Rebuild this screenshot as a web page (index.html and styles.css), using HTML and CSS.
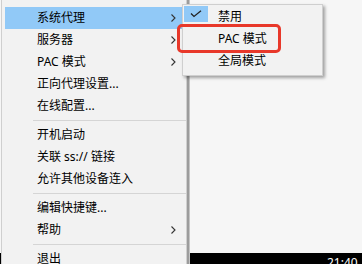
FILE: index.html
```html
<!DOCTYPE html>
<html>
<head>
<meta charset="utf-8">
<link rel="stylesheet" href="styles.css">
</head>
<body>
<div class="taskbar"><span class="clock">21:40</span></div>

<div class="menu main">
  <div class="item active"><span class="label">系统代理</span><svg class="chev" width="5" height="8" viewBox="0 0 5 8"><polyline points="0.5,0.5 4,4 0.5,7.5" fill="none" stroke="#333" stroke-width="1.1"/></svg></div>
  <div class="item"><span class="label">服务器</span><svg class="chev" width="5" height="8" viewBox="0 0 5 8"><polyline points="0.5,0.5 4,4 0.5,7.5" fill="none" stroke="#333" stroke-width="1.1"/></svg></div>
  <div class="item"><span class="label">PAC 模式</span><svg class="chev" width="5" height="8" viewBox="0 0 5 8"><polyline points="0.5,0.5 4,4 0.5,7.5" fill="none" stroke="#333" stroke-width="1.1"/></svg></div>
  <div class="item"><span class="label">正向代理设置...</span></div>
  <div class="item"><span class="label">在线配置...</span></div>
  <div class="sep"></div>
  <div class="item"><span class="label">开机启动</span></div>
  <div class="item"><span class="label">关联 ss:// 链接</span></div>
  <div class="item"><span class="label">允许其他设备连入</span></div>
  <div class="sep"></div>
  <div class="item"><span class="label">编辑快捷键...</span></div>
  <div class="item"><span class="label">帮助</span><svg class="chev" width="5" height="8" viewBox="0 0 5 8"><polyline points="0.5,0.5 4,4 0.5,7.5" fill="none" stroke="#333" stroke-width="1.1"/></svg></div>
  <div class="sep"></div>
  <div class="item"><span class="label">退出</span></div>
</div>

<div class="menu sub">
  <div class="sitem"><span class="check on"><svg width="12" height="8" viewBox="0 0 12 8"><polyline points="1,3.5 4,6.5 11,0.8" fill="none" stroke="#222" stroke-width="1.3"/></svg></span><span class="slabel">禁用</span></div>
  <div class="sitem"><span class="check"></span><span class="slabel">PAC 模式</span></div>
  <div class="sitem"><span class="check"></span><span class="slabel">全局模式</span></div>
</div>

<div class="mark"></div>
</body>
</html>
```

FILE: styles.css
```css
html, body {
  margin: 0;
  padding: 0;
}
body {
  width: 362px;
  height: 264px;
  overflow: hidden;
  position: relative;
  background: #f6f6f6;
  font-family: "Noto Sans", "Noto Sans CJK SC", sans-serif;
  font-size: 12px;
  color: #000;
}
.taskbar {
  position: absolute;
  left: 0;
  right: 0;
  top: 253px;
  height: 11px;
  background: #000;
}
.clock {
  position: absolute;
  left: 327px;
  top: 3px;
  color: #fff;
  font-size: 12px;
  line-height: 14px;
}
.menu {
  position: absolute;
  box-sizing: border-box;
  background: #f2f2f2;
  border: 1px solid #cfcfcf;
}
.main {
  left: 1px;
  top: -3px;
  width: 186px;
  padding: 9px 3px 4px 3px;
  box-shadow: 2px 0 0 #9c9c9c, 3px 0 0 #c4c4c4;
}
.item {
  height: 22px;
  display: flex;
  align-items: center;
  padding-left: 32px;
  padding-right: 7px;
}
.item.active {
  background: #91c9f7;
}
.label {
  flex: 1;
  white-space: nowrap;
  line-height: 22px;
}
.chev {
  display: block;
}
.sep {
  height: 7px;
  position: relative;
}
.sep::after {
  content: "";
  position: absolute;
  left: 28px;
  right: -3px;
  top: 3px;
  height: 1px;
  background: #d5d5d5;
}
.sub {
  left: 182px;
  top: 4px;
  width: 141px;
  height: 72px;
  padding: 1px 1px;
  box-shadow: 2px 2px 3px rgba(0, 0, 0, 0.35);
}
.sitem {
  height: 22px;
  display: flex;
  align-items: flex-start;
}
.check {
  width: 24px;
  height: 16px;
  flex: none;
  display: flex;
  align-items: center;
  justify-content: center;
}
.check.on {
  background: #91c9f7;
}
.slabel {
  margin-left: 10px;
  line-height: 22px;
  white-space: nowrap;
}
.mark {
  position: absolute;
  left: 177px;
  top: 24px;
  width: 104px;
  height: 29px;
  box-sizing: border-box;
  border: 3px solid #e8382a;
  border-radius: 5px;
}
```
